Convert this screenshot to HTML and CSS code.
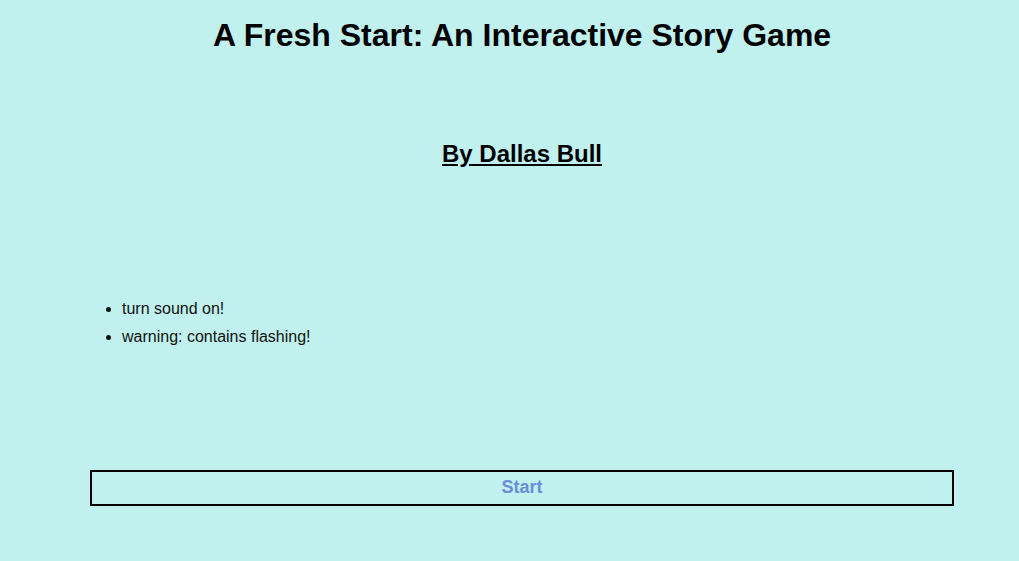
FILE: index.html
```html
<!DOCTYPE html>
<html lang="en">
<head>
<meta charset="utf-8">
<title>A Fresh Start</title>
<link rel="stylesheet" href="styles.css">
</head>
<body>
<main class="page">
  <h1 class="title">A Fresh Start: An Interactive Story Game</h1>
  <h2 class="byline">By Dallas Bull</h2>
  <ul class="notes">
    <li>turn sound on!</li>
    <li>warning: contains flashing!</li>
  </ul>
  <button class="start" type="button">Start</button>
</main>
</body>
</html>
```
FILE: styles.css
```css
html, body {
  margin: 0;
  padding: 0;
  background: #c0f1ee;
}
body {
  font-family: "Liberation Sans", Arial, sans-serif;
  color: #000;
}
.page {
  width: 864px;
  margin-left: 90px;
  padding-top: 17px;
}
.title {
  margin: 0 0 86px;
  font-size: 32px;
  line-height: 37px;
  font-weight: bold;
  text-align: center;
}
.byline {
  margin: 0 0 127px;
  font-size: 24px;
  line-height: 28px;
  font-weight: bold;
  text-align: center;
  text-decoration: underline;
}
.notes {
  margin: 0 0 119px;
  padding-left: 32px;
  font-size: 16px;
  line-height: 28px;
  color: #111;
}
.start {
  display: block;
  width: 864px;
  height: 36px;
  margin: 0;
  padding: 0 0 2px;
  border: 2px solid #000;
  background: transparent;
  font-family: "Liberation Sans", Arial, sans-serif;
  font-size: 18px;
  font-weight: bold;
  color: #6b8dd8;
  cursor: pointer;
}
```
